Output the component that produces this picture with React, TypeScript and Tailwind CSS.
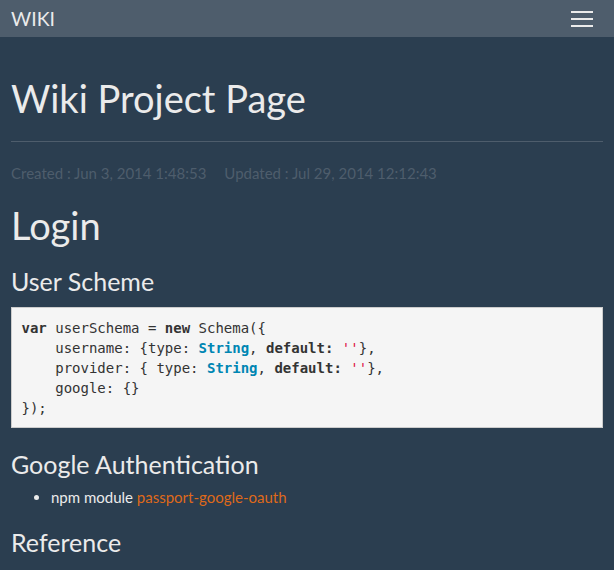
export default function App() {
  return (
    <div className="min-h-[570px] bg-[#2b3e50] text-[#ebebeb] font-['Lato','Liberation_Sans',sans-serif] text-[15px] leading-[1.428571]">
      <nav className="h-[37px] bg-[#4e5d6c] flex items-center justify-between pl-[11px] pr-[21px]">
        <span className="text-[19.5px] leading-none text-[#ebebeb]">WIKI</span>
        <div className="flex flex-col gap-[5px]">
          <span className="block w-[22px] h-[2px] bg-[#ebebeb]" />
          <span className="block w-[22px] h-[2px] bg-[#ebebeb]" />
          <span className="block w-[22px] h-[2px] bg-[#ebebeb]" />
        </div>
      </nav>

      <main className="px-[11px] pb-[20px]">
        <h1 className="text-[38px] leading-[1.1] mt-[41px]">Wiki Project Page</h1>
        <hr className="mt-[21px] border-0 border-t border-[#4e5d6c]" />
        <div className="mt-[21px] flex gap-[18px] text-[#4e5d6c]">
          <span>Created : Jun 3, 2014 1:48:53</span>
          <span>Updated : Jul 29, 2014 12:12:43</span>
        </div>

        <h1 className="text-[38px] leading-[1.1] mt-[21px]">Login</h1>
        <h3 className="text-[25px] leading-[1.1] mt-[21px]">User Scheme</h3>
        <pre className="mt-[11.5px] bg-[#f5f5f5] border border-[#cccccc] p-[9.5px] text-[14px] leading-[20px] text-[#333333] font-['DejaVu_Sans_Mono',monospace] overflow-hidden">
          <span className="font-bold">var</span> userSchema = <span className="font-bold">new</span> Schema({"{"}
          {"\n    "}username: {"{"}type: <span className="font-bold text-[#0086b3]">String</span>, <span className="font-bold">default:</span> <span className="text-[#dd1144]">''</span>{"},"}
          {"\n    "}provider: {"{ "}type: <span className="font-bold text-[#0086b3]">String</span>, <span className="font-bold">default:</span> <span className="text-[#dd1144]">''</span>{"},"}
          {"\n    "}google: {"{}"}
          {"\n});"}
        </pre>

        <h3 className="text-[25px] leading-[1.1] mt-[22.5px]">Google Authentication</h3>
        <ul className="list-disc pl-[40px] mt-[9px]">
          <li>
            npm module <a className="text-[#df691a]">passport-google-oauth</a>
          </li>
        </ul>

        <h3 className="text-[25px] leading-[1.1] mt-[21px]">Reference</h3>
      </main>
    </div>
  )
}
